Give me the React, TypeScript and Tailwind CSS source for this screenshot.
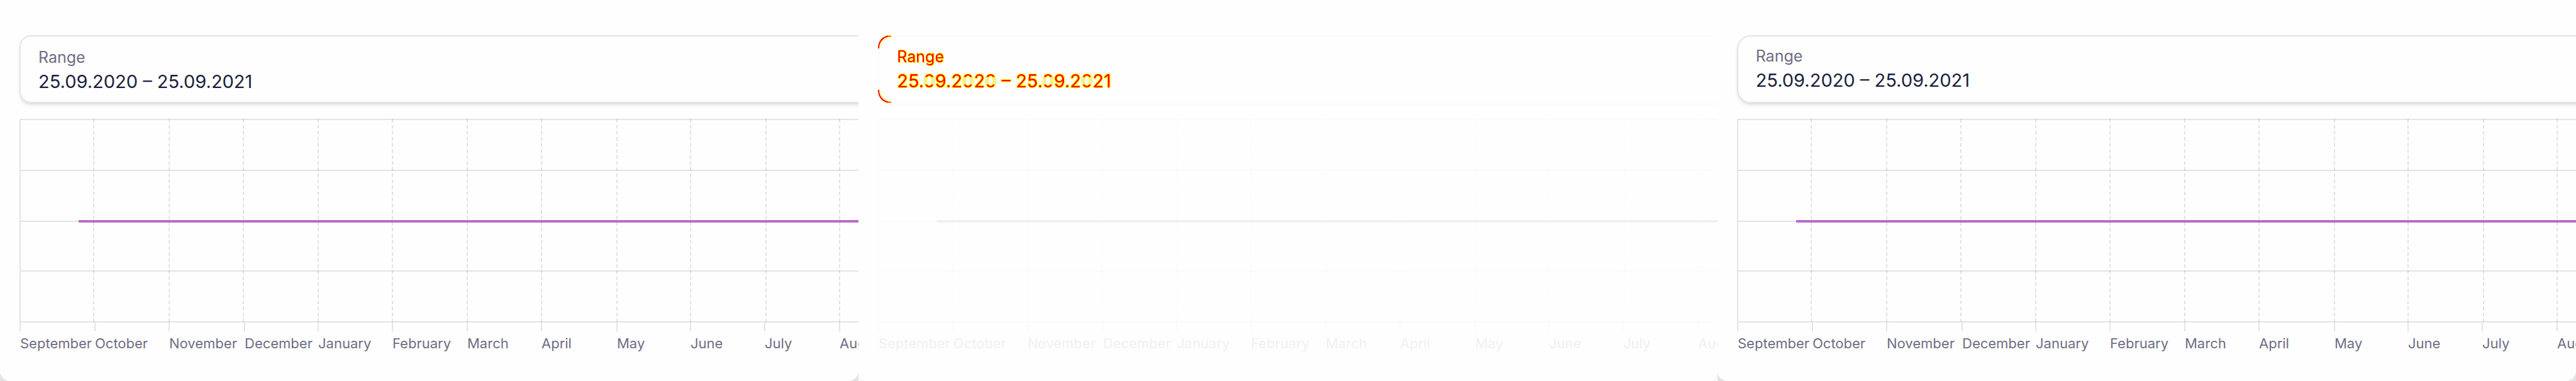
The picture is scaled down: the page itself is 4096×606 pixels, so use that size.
const MONTHS = [
  { name: "September", tick: 0, grid: 0 },
  { name: "October", tick: 119, grid: 117 },
  { name: "November", tick: 237, grid: 237 },
  { name: "December", tick: 357, grid: 355 },
  { name: "January", tick: 474, grid: 474 },
  { name: "February", tick: 592, grid: 592 },
  { name: "March", tick: 711, grid: 711 },
  { name: "April", tick: 829, grid: 829 },
  { name: "May", tick: 949, grid: 949 },
  { name: "June", tick: 1066, grid: 1066 },
  { name: "July", tick: 1184, grid: 1186 },
  { name: "August", tick: 1303, grid: 1303 },
];

const ROWS = [0, 81, 162, 241, 322];

const RANGE = "25.09.2020 – 25.09.2021";

type Mode = "before" | "diff" | "after";

const SECTION = {
  before: "min-w-0 overflow-hidden bg-[#e4e4e4]",
  diff: "min-w-0 overflow-hidden bg-[#fafafa]",
  after: "min-w-0 overflow-hidden bg-[#e4e4e4]",
};

const CARD = {
  before: "relative -mr-10 h-[108px] border-2 pl-7 rounded-[18px] border-[#e4e4e4] pt-[15px] shadow-md",
  diff: "relative -mr-10 h-[108px] border-2 pl-7 rounded-[20px] border-[#fcfcfc] pt-[14px] shadow-[0_4px_6px_rgba(0,0,0,0.012)]",
  after: "relative -mr-10 h-[108px] border-2 pl-7 rounded-[22px] border-[#e4e4e4] pt-[13px] shadow-md",
};

function Chart({ faded }: { faded: boolean }) {
  return (
    <svg
      className={
        faded
          ? "mt-[25px] block h-[380px] w-full opacity-[0.1] grayscale"
          : "mt-[25px] block h-[380px] w-full"
      }
      role="img"
      aria-label="Values by month"
    >
      {ROWS.map((y) => (
        <rect key={y} x="0" y={y} width="100%" height="2" fill="#e4e4e4" />
      ))}
      <rect x="0" y="0" width="2" height="338" fill="#e4e4e4" />
      <rect x="94" y="161" width="100%" height="4" fill="#b96bc9" />
      {MONTHS.slice(1).map((m) => (
        <g key={m.name}>
          <line
            x1={m.grid + 1}
            x2={m.grid + 1}
            y1="0"
            y2="323"
            stroke="#000000"
            strokeOpacity="0.11"
            strokeWidth="2"
            strokeDasharray="5.8 3.84"
          />
          <rect x={m.tick} y="324" width="2" height="14" fill="#e4e4e4" />
        </g>
      ))}
      {MONTHS.map((m) => (
        <text key={m.name} x={m.tick + 1} y="365" className="fill-[#6f6e84] text-[22px]">
          {m.name}
        </text>
      ))}
    </svg>
  );
}

function Corner({ className }: { className: string }) {
  return (
    <svg className={className} viewBox="0 0 22 22" fill="none" aria-hidden="true">
      <path d="M1 21C1 9 9 1 21 1" stroke="#ff0000" strokeWidth="2" />
      <path d="M2.5 21.5C3 11 11 3 21.5 2.2" stroke="#ffff00" strokeWidth="1" />
      <path d="M5 8L8 5M11 3L14 2" stroke="#ff0000" strokeWidth="2" />
      <path d="M4 7L7 4M10 2L13 1M16 .5H21" stroke="#ffff00" strokeWidth="1" />
    </svg>
  );
}

function DiffRange() {
  return (
    <div className="text-[29px] leading-[42px] text-[#ff0000] [filter:drop-shadow(0_1px_0_#ffff00)_drop-shadow(0_-1px_0_#ffff00)_drop-shadow(1px_0_0_#ffff00)_drop-shadow(-1px_0_0_#ffff00)]">
      {RANGE.split(/(0)/).map((part, i) =>
        part === "0" ? (
          <span
            key={i}
            className="bg-[linear-gradient(to_bottom,#ff0000_32%,#e8e8e8_34%,#e8e8e8_66%,#ff0000_68%)] bg-clip-text text-transparent"
          >
            0
          </span>
        ) : (
          part
        ),
      )}
    </div>
  );
}

function Panel({ mode }: { mode: Mode }) {
  const diff = mode === "diff";
  return (
    <section className={SECTION[mode]}>
      <div className="h-full overflow-hidden rounded-b-[16px] bg-[#fefefe] pt-14 pl-[31px]">
        <div className={CARD[mode]}>
          {diff && (
            <>
              <Corner className="absolute -top-0.5 -left-0.5 size-[22px]" />
              <Corner className="absolute -bottom-0.5 -left-0.5 size-[22px] -scale-y-100" />
            </>
          )}
          <div
            className={
              diff
                ? "text-[25px] leading-9 text-[#ff0000] [filter:drop-shadow(0_1px_0_#ffff00)_drop-shadow(0_-1px_0_#ffff00)_drop-shadow(1px_0_0_#ffff00)]"
                : "text-[25px] leading-9 text-[#6f6e84]"
            }
          >
            Range
          </div>
          {diff ? <DiffRange /> : <div className="text-[29px] leading-[42px] text-[#1c1e3d]">{RANGE}</div>}
        </div>
        <Chart faded={diff} />
      </div>
    </section>
  );
}

export default function App() {
  return (
    <main className="grid min-h-screen grid-cols-3 font-['Inter',sans-serif]">
      <Panel mode="before" />
      <Panel mode="diff" />
      <Panel mode="after" />
    </main>
  );
}
